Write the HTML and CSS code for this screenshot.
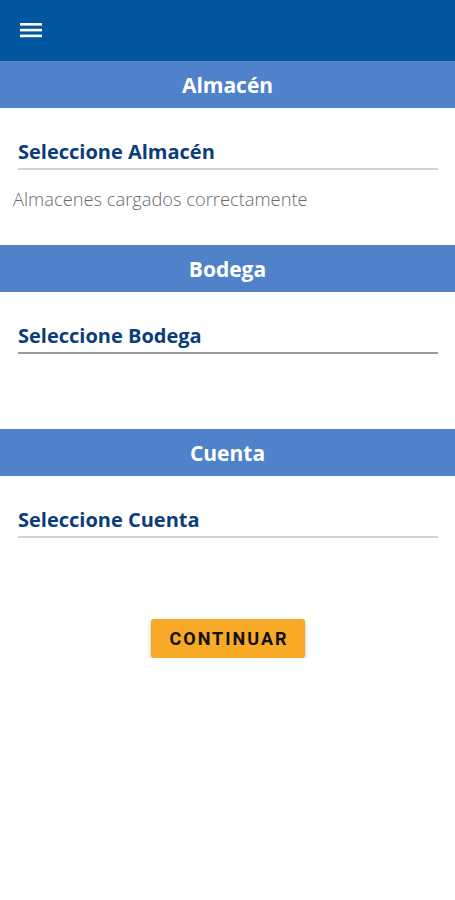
FILE: index.html
```html
<!DOCTYPE html>
<html lang="es">
<head>
<meta charset="utf-8">
<title>Almacén</title>
<link rel="stylesheet" href="styles.css">
</head>
<body>
<header class="topbar">
  <button class="menu-btn" aria-label="Menú">
    <svg width="22" height="16" viewBox="0 0 22 16"><rect x="0" y="1" width="22" height="2.6" fill="#fff"/><rect x="0" y="6.8" width="22" height="2.6" fill="#fff"/><rect x="0" y="12.6" width="22" height="2.6" fill="#fff"/></svg>
  </button>
</header>
<main>
  <section class="section">
    <h2 class="section-title">Almacén</h2>
    <div class="section-body">
      <div class="field">Seleccione Almacén</div>
      <p class="message">Almacenes cargados correctamente</p>
    </div>
  </section>
  <section class="section">
    <h2 class="section-title">Bodega</h2>
    <div class="section-body">
      <div class="field field-dark">Seleccione Bodega</div>
    </div>
  </section>
  <section class="section">
    <h2 class="section-title">Cuenta</h2>
    <div class="section-body">
      <div class="field">Seleccione Cuenta</div>
    </div>
  </section>
  <div class="actions">
    <button class="btn-continue">CONTINUAR</button>
  </div>
</main>
</body>
</html>
```
FILE: styles.css
```css
* { box-sizing: border-box; }
html, body { margin: 0; padding: 0; background: #fff; }
body { font-family: "Open Sans", "Noto Sans", sans-serif; width: 455px; }
.topbar {
  height: 61px;
  background: #0156a0;
  display: flex;
  align-items: center;
  padding-left: 20px;
  padding-bottom: 2px;
}
.menu-btn {
  background: none; border: 0; padding: 0; margin: 0;
  display: flex;
}
.section-title {
  margin: 0;
  height: 47px;
  background: #4f82c9;
  color: #fff;
  font-size: 21px;
  font-weight: 700;
  display: flex;
  align-items: center;
  justify-content: center;
}
.section-body { height: 137px; }
.field {
  margin: 0 17px 0 18px;
  padding-top: 30px;
  height: 62px;
  line-height: 28px;
  font-size: 20px;
  font-weight: 700;
  color: #0b3c7b;
  border-bottom: 2px solid #d2d2d2;
}
.field-dark { border-bottom-color: #9a9a9a; }
.message {
  margin: 19px 0 0 13px;
  font-size: 18.3px;
  font-weight: 300;
  line-height: 20px;
  color: #6a6a6a;
}
.actions {
  display: flex;
  justify-content: center;
  padding-top: 6px;
  padding-left: 1px;
}
.btn-continue {
  width: 154px;
  height: 39px;
  background: #f8a928;
  border: 0;
  border-radius: 3px;
  box-shadow: 0 2px 4px rgba(0,0,0,0.25);
  font-family: Roboto, "Noto Sans", sans-serif;
  font-weight: 700;
  font-size: 18px;
  letter-spacing: 2px;
  padding: 0 0 0 2px;
  color: #111;
}
```
